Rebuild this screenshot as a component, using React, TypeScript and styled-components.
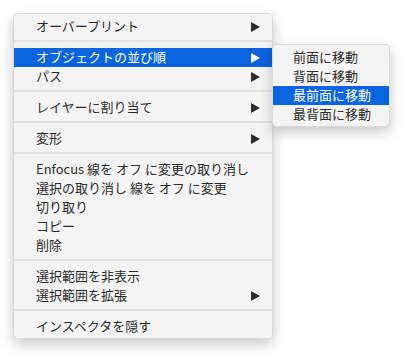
import React, { FunctionComponent } from 'react';
import styled, { createGlobalStyle } from 'styled-components';

const PageBody = createGlobalStyle`
  html, body {
    margin: 0;
    background: #ffffff;
  }
  body {
    font-family: "Noto Sans CJK JP", "Noto Sans", sans-serif;
  }
`;

const Canvas = styled.div`
    width: 410px;
    height: 358px;
    padding: 13px;
    box-sizing: border-box;
`;

const Menu = styled.div<{ $width: number }>`
    position: relative;
    width: ${(p) => p.$width}px;
    box-sizing: border-box;
    padding: 3px 0 2px;
    background: #f4f4f4;
    border: 1px solid rgba(0, 0, 0, 0.1);
    border-radius: 5px;
    box-shadow: 0 5px 13px rgba(0, 0, 0, 0.22);
`;

const SubMenu = styled(Menu)`
    position: absolute;
    left: 100%;
    top: -4px;
    z-index: 2;
`;

const Item = styled.div<{ $active?: boolean; $indent: number }>`
    position: relative;
    display: flex;
    align-items: center;
    justify-content: space-between;
    height: 19px;
    padding: 0 12px 0 ${(p) => p.$indent}px;
    font-size: 13px;
    white-space: nowrap;
    color: ${(p) => (p.$active ? '#ffffff' : '#2a2a2a')};
    background: ${(p) => (p.$active ? '#0a63df' : 'transparent')};
`;

const Label = styled.span`
    line-height: 17px;
    padding-bottom: 2px;
`;

const Separator = styled.div`
    height: 2px;
    margin: 4px 0 6px;
    background: #e3e3e3;
`;

const Arrow = styled.svg`
    flex: none;
    width: 9px;
    height: 10px;
`;

const Chevron: FunctionComponent<{ active?: boolean }> = ({ active }) => (
    <Arrow viewBox="0 0 9 10">
        <polygon points="0,0 9,5 0,10" fill={active ? '#ffffff' : '#2b2b2b'} />
    </Arrow>
);

type Entry = { label: string; sub?: boolean; active?: boolean } | 'sep';

const entries: Entry[] = [
    { label: 'オーバープリント', sub: true },
    'sep',
    { label: 'オブジェクトの並び順', sub: true, active: true },
    { label: 'パス', sub: true },
    'sep',
    { label: 'レイヤーに割り当て', sub: true },
    'sep',
    { label: '変形', sub: true },
    'sep',
    { label: 'Enfocus 線を オフ に変更の取り消し' },
    { label: '選択の取り消し 線を オフ に変更' },
    { label: '切り取り' },
    { label: 'コピー' },
    { label: '削除' },
    'sep',
    { label: '選択範囲を非表示' },
    { label: '選択範囲を拡張', sub: true },
    'sep',
    { label: 'インスペクタを隠す' },
];

const arrange = ['前面に移動', '背面に移動', '最前面に移動', '最背面に移動'];

const App: FunctionComponent = () => {
    return (
        <>
            <PageBody />
            <Canvas>
                <Menu $width={260}>
                    {entries.map((e, i) =>
                        e === 'sep' ? (
                            <Separator key={i} />
                        ) : (
                            <Item key={i} $active={e.active} $indent={22}>
                                <Label>{e.label}</Label>
                                {e.sub && <Chevron active={e.active} />}
                                {e.active && (
                                    <SubMenu $width={118}>
                                        {arrange.map((label, j) => (
                                            <Item key={label} $active={j === 2} $indent={20}>
                                                <Label>{label}</Label>
                                            </Item>
                                        ))}
                                    </SubMenu>
                                )}
                            </Item>
                        ),
                    )}
                </Menu>
            </Canvas>
        </>
    );
};

export default App;
